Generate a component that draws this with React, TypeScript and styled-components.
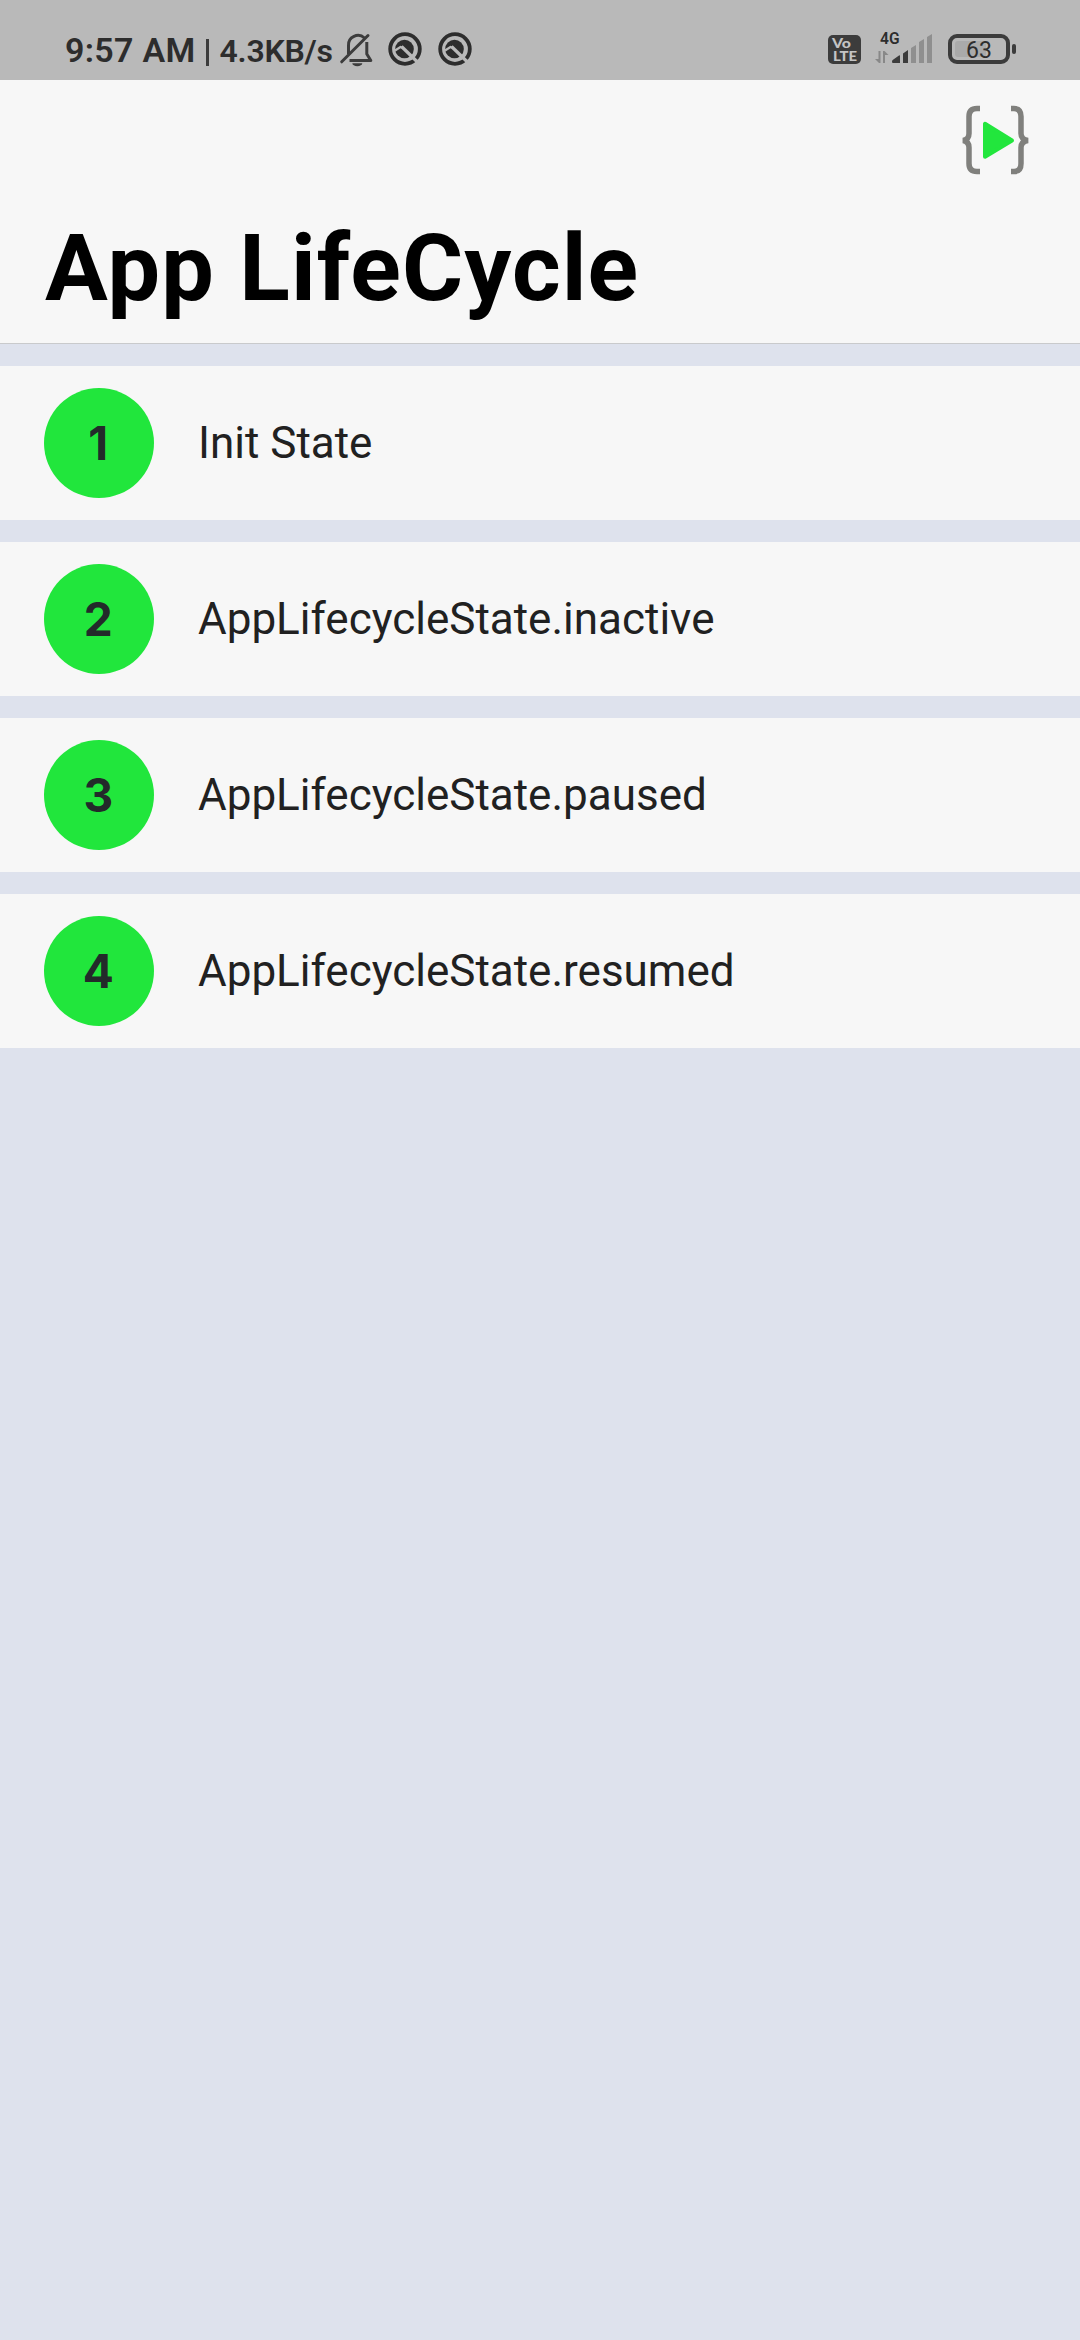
import React from "react";
import styled, { createGlobalStyle } from "styled-components";

const GlobalStyle = createGlobalStyle`
  * { box-sizing: border-box; }
  body { margin: 0; background: #dee2ed; font-family: Roboto, "Liberation Sans", sans-serif; }
`;

const Screen = styled.main`
  display: flex;
  flex-direction: column;
  width: 1080px;
  min-height: 2340px;
  background: #dee2ed;
`;

const StatusBar = styled.div`
  display: flex;
  align-items: flex-start;
  justify-content: space-between;
  height: 80px;
  padding: 0 62px 0 65px;
  background: #b9b9b9;
  color: #2d2d2d;
`;

const StatusGroup = styled.div`
  display: flex;
  height: 80px;
`;

const Clock = styled.span`
  width: 138px;
  padding-top: 30px;
  font-size: 34px;
  font-weight: 600;
  line-height: 40px;
  letter-spacing: 0.3px;
  white-space: nowrap;
`;

const Separator = styled.span`
  width: 2.5px;
  height: 27px;
  margin: 39px 11px 0 3px;
  background: #3c3c3c;
`;

const Speed = styled.span`
  width: 119.5px;
  padding-top: 31px;
  font-size: 32px;
  font-weight: 600;
  line-height: 40px;
  letter-spacing: -0.25px;
  white-space: nowrap;
`;

const StatusIcon = styled.svg<{ $gap?: number }>`
  display: block;
  flex: none;
  margin-left: ${(p) => p.$gap ?? 0}px;
`;

const Header = styled.header`
  display: flex;
  flex-direction: column;
  height: 264px;
  background: #f7f7f7;
  border-bottom: 1px solid #c9cacc;
`;

const Toolbar = styled.div`
  display: flex;
  justify-content: flex-end;
  height: 121px;
  padding: 24px 49px 0 0;
`;

const Title = styled.h1`
  margin: 0;
  padding: 12px 0 0 45px;
  font-size: 93.5px;
  font-weight: 700;
  line-height: 110px;
  letter-spacing: 1.13px;
  color: #000;
  white-space: nowrap;
`;

const List = styled.ul`
  display: flex;
  flex-direction: column;
  gap: 22px;
  margin: 22px 0 0;
  padding: 0;
  list-style: none;
`;

const Row = styled.li`
  display: flex;
  align-items: center;
  gap: 44px;
  height: 154px;
  padding: 0 44px;
  background: #f7f7f7;
`;

const Badge = styled.span`
  display: flex;
  align-items: center;
  justify-content: center;
  width: 110px;
  height: 110px;
  padding-right: 1.5px;
  border-radius: 50%;
  background: #21e63c;
  color: #232a2a;
  font-family: Inter, Roboto, sans-serif;
  font-size: 46px;
  font-weight: 700;
  line-height: 56px;
`;

const Label = styled.span`
  font-size: 44px;
  line-height: 52px;
  color: #212121;
  white-space: nowrap;
`;

const MutedBell = () => (
  <StatusIcon width="34" height="80" viewBox="339 0 34 80" fill="none">
    <path d="M348.500 54V45.500a9.500 9.500 0 0 1 16-7.500" stroke="#3c3c3c" strokeWidth="3" />
    <path d="M366.800 42V54l4 6.500H349.500" stroke="#3c3c3c" strokeWidth="3" strokeLinejoin="round" />
    <path d="M341.700 61.800L368 35.500" stroke="#3c3c3c" strokeWidth="3" strokeLinecap="round" />
    <path d="M352.300 63.200h10a5 3 0 0 1-10 0z" fill="#3c3c3c" />
  </StatusIcon>
);

const QBadge = ({ gap }: { gap: number }) => (
  <StatusIcon $gap={gap} width="34" height="80" viewBox="0 0 34 80" fill="none">
    <circle cx="17" cy="49" r="14.800" stroke="#2d2d2d" strokeWidth="3.800" />
    <circle cx="16.500" cy="49" r="9.300" fill="#2d2d2d" />
    <path d="M7 50.500l5.500-3.500 3 1" stroke="#b9b9b9" strokeWidth="2.200" />
    <path d="M13.500 46.500L31 63.500" stroke="#b9b9b9" strokeWidth="3.200" />
  </StatusIcon>
);

const VoLte = () => (
  <StatusIcon width="33" height="80" viewBox="828 0 33 80">
    <rect x="828" y="35" width="33" height="29" rx="5" fill="#3c3c3c" />
    <g fill="#c4c4c4" fontFamily="Lato, sans-serif" fontWeight="900">
      <text x="832" y="47.700" fontSize="13.500" textLength="19" lengthAdjust="spacingAndGlyphs">Vo</text>
      <text x="833" y="60.800" fontSize="14" textLength="24" lengthAdjust="spacingAndGlyphs">LTE</text>
    </g>
  </StatusIcon>
);

const Signal = () => (
  <StatusIcon $gap={14} width="58" height="80" viewBox="875 0 58 80">
    <text x="880" y="44" fontSize="16" fontWeight="600" fill="#2d2d2d" textLength="19.500" lengthAdjust="spacingAndGlyphs">4G</text>
    <path d="M878.500 51h2v12h-1.500l-4-4h3.500zM883 51h1.500l4 4H885v8h-2z" fill="#888" />
    <path d="M892 61.500q0-1 1-1.700l6-4.300q1-.5 1 .5v7h-7q-1 0-1-1.500zM903 63v-9.500l5-3.500v13z" fill="#3c3c3c" />
    <path d="M911 63V48l5-3v18zM919 63V42l5-3v24zM927 63V37l5-3v29z" fill="#8f8f8f" />
  </StatusIcon>
);

const Battery = () => (
  <StatusIcon $gap={15} width="70" height="80" viewBox="948 0 70 80">
    <rect x="950" y="36" width="58" height="26" rx="7" fill="none" stroke="#3c3c3c" strokeWidth="4" />
    <rect x="955" y="41" width="31" height="16" rx="3" fill="#aaaaaa" />
    <rect x="1012" y="44" width="4" height="10" rx="2" fill="#3c3c3c" />
    <text x="966" y="57.800" fontSize="23" fill="#2d2d2d">63</text>
  </StatusIcon>
);

const BracesPlay = () => (
  <svg width="70" height="74" viewBox="961 104 70 74" fill="none">
    <g stroke="#80807d" strokeWidth="5.500">
      <path d="M980 108.500h-3q-8 0-8 8v17q0 6-6 7q6 1 6 7v16q0 8 8 8h3" />
      <path d="M1011 108.500h3q7 0 7 8v17q0 6 7 7q-7 1-7 7v16q0 8-7 8h-3" />
    </g>
    <path d="M985 123.800v33l27-16.300z" fill="#22e63d" stroke="#22e63d" strokeWidth="4" strokeLinejoin="round" />
  </svg>
);

const events = [
  "Init State",
  "AppLifecycleState.inactive",
  "AppLifecycleState.paused",
  "AppLifecycleState.resumed",
];

export default function App() {
  return (
    <Screen>
      <GlobalStyle />
      <StatusBar>
        <StatusGroup>
          <Clock>9:57 AM</Clock>
          <Separator />
          <Speed>4.3KB/s</Speed>
          <MutedBell />
          <QBadge gap={15} />
          <QBadge gap={16} />
        </StatusGroup>
        <StatusGroup>
          <VoLte />
          <Signal />
          <Battery />
        </StatusGroup>
      </StatusBar>
      <Header>
        <Toolbar>
          <BracesPlay />
        </Toolbar>
        <Title>App LifeCycle</Title>
      </Header>
      <List>
        {events.map((name, i) => (
          <Row key={name}>
            <Badge>{i + 1}</Badge>
            <Label>{name}</Label>
          </Row>
        ))}
      </List>
    </Screen>
  );
}
